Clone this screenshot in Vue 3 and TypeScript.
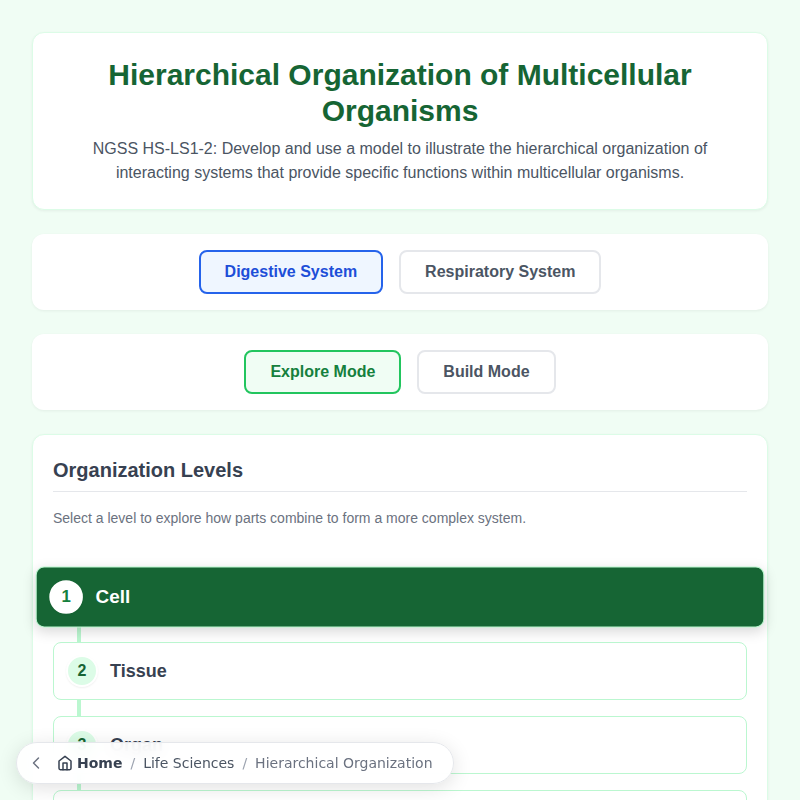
<script setup lang="ts">
import { ref } from "vue";

interface Level {
  id: number;
  name: string;
}

const systems = ["Digestive System", "Respiratory System"];
const modes = ["Explore Mode", "Build Mode"];
const levels: Level[] = [
  { id: 1, name: "Cell" },
  { id: 2, name: "Tissue" },
  { id: 3, name: "Organ" },
  { id: 4, name: "Organ System" },
];

const activeSystem = ref(systems[0]);
const activeMode = ref(modes[0]);
const activeLevel = ref(1);
</script>

<template>
  <div class="page">
    <header class="card bordered header">
      <h1>Hierarchical Organization of Multicellular Organisms</h1>
      <p>
        NGSS HS-LS1-2: Develop and use a model to illustrate the hierarchical
        organization of interacting systems that provide specific functions
        within multicellular organisms.
      </p>
    </header>

    <div class="card selector">
      <button
        v-for="system in systems"
        :key="system"
        class="btn"
        :class="{ blueActive: activeSystem === system }"
        @click="activeSystem = system"
      >
        {{ system }}
      </button>
    </div>

    <div class="card selector">
      <button
        v-for="mode in modes"
        :key="mode"
        class="btn"
        :class="{ greenActive: activeMode === mode }"
        @click="activeMode = mode"
      >
        {{ mode }}
      </button>
    </div>

    <section class="card bordered levels">
      <h2>Organization Levels</h2>
      <p class="hint">
        Select a level to explore how parts combine to form a more complex
        system.
      </p>
      <div class="levelList">
        <div
          v-for="level in levels"
          :key="level.id"
          class="level"
          :class="{ active: activeLevel === level.id }"
          @click="activeLevel = level.id"
        >
          <span class="num">{{ level.id }}</span>
          <span class="name">{{ level.name }}</span>
        </div>
      </div>
    </section>

    <nav class="crumbs">
      <svg class="back" width="20" height="20" viewBox="0 0 24 24" fill="none" stroke="currentColor" stroke-width="1.75" stroke-linecap="round" stroke-linejoin="round">
        <path d="m15 18-6-6 6-6" />
      </svg>
      <svg class="home" width="16" height="16" viewBox="0 0 24 24" fill="none" stroke="currentColor" stroke-width="2.25" stroke-linecap="round" stroke-linejoin="round">
        <path d="m3 9 9-7 9 7v11a2 2 0 0 1-2 2H5a2 2 0 0 1-2-2z" />
        <polyline points="9 22 9 12 15 12 15 22" />
      </svg>
      <span class="crumbHome">Home</span>
      <span class="sep">/</span>
      <span class="crumbLink">Life Sciences</span>
      <span class="sep">/</span>
      <span class="crumbNow">Hierarchical Organization</span>
    </nav>
  </div>
</template>

<style scoped>
.page {
  position: relative;
  box-sizing: border-box;
  height: 800px;
  overflow: hidden;
  padding: 32px 32px 0;
  background: #f0fdf4;
  font-family: "Liberation Sans", Arial, sans-serif;
}

.card {
  box-sizing: border-box;
  background: #fff;
  border-radius: 12px;
  box-shadow: 0 1px 3px rgba(0, 0, 0, 0.06);
  margin-bottom: 24px;
}
.bordered {
  border: 1px solid #dcfce7;
}

.header {
  padding: 24px;
  text-align: center;
}
.header h1 {
  margin: 0 0 8px;
  font-size: 30px;
  line-height: 36px;
  font-weight: 700;
  color: #166534;
}
.header p {
  margin: 0 auto;
  max-width: 650px;
  font-size: 16px;
  line-height: 24px;
  color: #4b5563;
}

.selector {
  display: flex;
  justify-content: center;
  gap: 16px;
  padding: 16px;
  height: 76px;
}

.btn {
  height: 44px;
  padding: 0 24px;
  border: 2px solid #e5e7eb;
  border-radius: 8px;
  background: #fff;
  color: #4b5563;
  font-family: inherit;
  font-size: 16px;
  font-weight: 700;
}
.blueActive {
  border-color: #2563eb;
  background: #eff6ff;
  color: #1d4ed8;
}
.greenActive {
  border-color: #22c55e;
  background: #f0fdf4;
  color: #15803d;
}

.levels {
  padding: 20px;
  height: 500px;
}
.levels h2 {
  margin: 0 0 16px;
  padding-bottom: 6px;
  border-bottom: 1px solid #e5e7eb;
  font-size: 20px;
  line-height: 30px;
  font-weight: 700;
  color: #374151;
}
.hint {
  margin: 0 0 39px;
  font-size: 14px;
  line-height: 21px;
  color: #6b7280;
}

.levelList {
  display: flex;
  flex-direction: column;
  gap: 16px;
}

.level {
  position: relative;
  display: flex;
  align-items: center;
  gap: 12px;
  padding: 12px;
  border: 1px solid #bbf7d0;
  border-radius: 8px;
  background: #fff;
}
.level + .level::before {
  content: "";
  position: absolute;
  left: 23px;
  top: -17px;
  width: 4px;
  height: 16px;
  background: #bbf7d0;
}
.level.active {
  background: #166534;
  transform: scale(1.05);
  box-shadow: 0 4px 12px rgba(0, 0, 0, 0.15);
  z-index: 1;
}

.num {
  box-sizing: border-box;
  display: flex;
  align-items: center;
  justify-content: center;
  width: 32px;
  height: 32px;
  border: 2px solid #fff;
  border-radius: 50%;
  background: #dcfce7;
  box-shadow: 0 1px 2px rgba(0, 0, 0, 0.06);
  color: #166534;
  font-size: 16px;
  font-weight: 700;
}
.active .num {
  background: #fff;
  color: #15803d;
}
.name {
  font-size: 18px;
  font-weight: 700;
  color: #374151;
}
.active .name {
  color: #fff;
}

.crumbs {
  position: absolute;
  left: 16px;
  top: 742px;
  box-sizing: border-box;
  display: flex;
  align-items: center;
  height: 42px;
  width: 438px;
  padding: 0 9px;
  border: 1px solid #e5e7eb;
  border-radius: 21px;
  background: rgba(255, 255, 255, 0.9);
  backdrop-filter: blur(8px);
  box-shadow: 0 4px 20px rgba(0, 0, 0, 0.12);
  font-family: "DejaVu Sans", sans-serif;
  font-size: 14px;
  white-space: nowrap;
  z-index: 2;
}
.back {
  flex: none;
  color: #6b7280;
  margin-right: 11px;
}
.home {
  flex: none;
  color: #374151;
  margin-right: 4px;
}
.crumbHome {
  font-weight: 700;
  color: #374151;
}
.sep {
  margin: 0 8px;
  color: #9ca3af;
}
.crumbLink {
  color: #4b5563;
}
.crumbNow {
  color: #6b7280;
}
</style>
